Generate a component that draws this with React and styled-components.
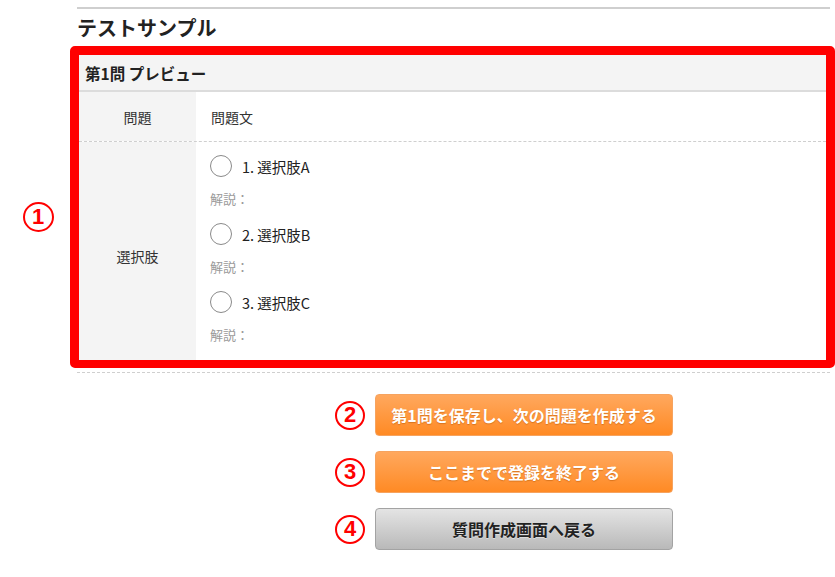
import React from "react";
import styled, { createGlobalStyle } from "styled-components";

const Global = createGlobalStyle`
  html, body { margin: 0; padding: 0; background: #fff; }
  body { font-family: "Noto Sans CJK JP", "Noto Sans", sans-serif; color: #333; }
`;

const Page = styled.div`
  width: 753px;
  padding: 7px 0 0 77px;
`;

const TopRule = styled.div`
  height: 2px;
  background: #cfcfcf;
`;

const Title = styled.h1`
  margin: 4px 0 0;
  font-size: 20px;
  line-height: 30px;
  font-weight: 700;
  color: #222;
`;

const FrameRow = styled.div`
  display: flex;
  margin: 3px -5px 0 -77px;
`;

const Gutter = styled.div`
  width: 70px;
  display: flex;
  align-items: center;
  justify-content: center;
  padding: 20px 0 0 6px;
  box-sizing: border-box;
`;

const Badge = styled.span`
  width: ${(p) => p.$size || 30}px;
  height: ${(p) => (p.$size || 30) - 1}px;
  box-sizing: border-box;
  border: 2.6px solid #ff0000;
  border-radius: 50%;
  color: #ff0000;
  display: inline-flex;
  align-items: center;
  justify-content: center;
  font-family: "Liberation Sans", Arial, sans-serif;
  font-weight: 700;
  font-size: ${(p) => ((p.$size || 30) * 0.72).toFixed(0)}px;
  line-height: 1;
  flex: none;
`;

const Frame = styled.div`
  flex: 1;
  border: 9px solid #ff0000;
  border-bottom-width: 8px;
  border-radius: 5px;
  background: #fff;
  display: flex;
  flex-direction: column;
`;

const PreviewHeader = styled.div`
  height: 35px;
  background: #f4f4f4;
  border-bottom: 2px solid #dcdcdc;
  display: flex;
  align-items: center;
  padding-left: 6px;
  font-size: 15.5px;
  font-weight: 700;
  color: #222;
`;

const Row = styled.div`
  display: grid;
  grid-template-columns: 117px 1fr;
  border-bottom: ${(p) => (p.$divider ? "1px dashed #cfcfcf" : "none")};
  min-height: ${(p) => p.$h}px;
`;

const LabelCell = styled.div`
  background: #f4f4f4;
  display: flex;
  align-items: center;
  justify-content: center;
  font-size: 14px;
  color: #333;
  padding-top: ${(p) => p.$pt || 0}px;
`;

const ValueCell = styled.div`
  padding: ${(p) => (p.$list ? "8px 0 14px 14px" : "0 0 0 15px")};
  display: flex;
  flex-direction: column;
  justify-content: ${(p) => (p.$list ? "flex-start" : "center")};
  font-size: 14px;
  color: #333;
`;

const Choice = styled.div`
  display: flex;
  flex-direction: column;
  gap: 4px;
  margin-bottom: 8px;
  &:last-child { margin-bottom: 0; }
`;

const ChoiceLine = styled.label`
  height: 32px;
  display: flex;
  align-items: center;
  gap: 10px;
  font-size: 14.5px;
  color: #222;
`;

const Radio = styled.span`
  width: 22px;
  height: 22px;
  box-sizing: border-box;
  border: 1.5px solid #8a8a8a;
  border-radius: 50%;
  background: #fff;
  flex: none;
`;

const Note = styled.div`
  height: 24px;
  display: flex;
  align-items: center;
  font-size: 13px;
  color: #9a9a9a;
`;

const DashedRule = styled.div`
  margin-top: 4px;
  border-top: 1px dashed #cfcfcf;
`;

const Actions = styled.div`
  display: flex;
  flex-direction: column;
  gap: 15px;
  margin: 21px 0 0 258px;
`;

const ActionRow = styled.div`
  display: flex;
  align-items: center;
  gap: 10px;
`;

const Button = styled.button`
  width: 298px;
  height: 42px;
  border-radius: 4px;
  font-family: "Noto Sans CJK JP", "Noto Sans", sans-serif;
  font-size: 16px;
  font-weight: 700;
  padding: 0;
  cursor: pointer;
  border: 1px solid ${(p) => (p.$variant === "gray" ? "#a3a3a3" : "#f6a35f")};
  color: ${(p) => (p.$variant === "gray" ? "#222" : "#fff")};
  text-shadow: ${(p) =>
    p.$variant === "gray" ? "0 1px 0 rgba(255,255,255,0.4)" : "0 1px 1px rgba(170,80,0,0.45)"};
  background: ${(p) =>
    p.$variant === "gray"
      ? "linear-gradient(#e4e4e4, #b9b9b9)"
      : "linear-gradient(#ffa85e, #ff8a24)"};
`;

const choices = ["選択肢A", "選択肢B", "選択肢C"];

export default function App() {
  return (
    <>
      <Global />
      <Page>
        <TopRule />
        <Title>テストサンプル</Title>
        <FrameRow>
          <Gutter>
            <Badge $size={31}>1</Badge>
          </Gutter>
          <Frame>
            <PreviewHeader>第1問 プレビュー</PreviewHeader>
            <Row $divider $h={49}>
              <LabelCell>問題</LabelCell>
              <ValueCell>問題文</ValueCell>
            </Row>
            <Row $h={218}>
              <LabelCell $pt={10}>選択肢</LabelCell>
              <ValueCell $list>
                {choices.map((c, i) => (
                  <Choice key={c}>
                    <ChoiceLine>
                      <Radio />
                      {i + 1}. {c}
                    </ChoiceLine>
                    <Note>解説：</Note>
                  </Choice>
                ))}
              </ValueCell>
            </Row>
          </Frame>
        </FrameRow>
        <DashedRule />
        <Actions>
          <ActionRow>
            <Badge>2</Badge>
            <Button>第1問を保存し、次の問題を作成する</Button>
          </ActionRow>
          <ActionRow>
            <Badge>3</Badge>
            <Button>ここまでで登録を終了する</Button>
          </ActionRow>
          <ActionRow>
            <Badge>4</Badge>
            <Button $variant="gray">質問作成画面へ戻る</Button>
          </ActionRow>
        </Actions>
      </Page>
    </>
  );
}
